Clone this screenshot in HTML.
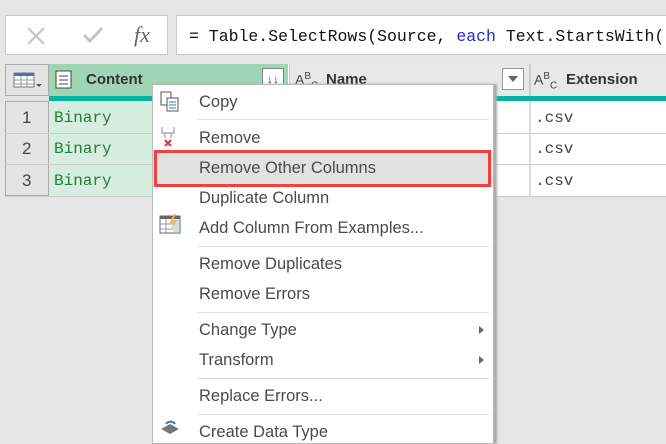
<!DOCTYPE html><html><head><style>
body{margin:0;width:666px;height:433px;background:#e6e6e6;position:relative;overflow:hidden;font-family:"Liberation Sans",sans-serif}
.a{position:absolute}
.mono{font-family:"Liberation Mono",monospace;font-size:16px}
.mi{position:absolute;left:46px;font-size:16.5px;color:#4a4a4a}
.sep{position:absolute;left:44px;right:4px;height:1px;background:#ddd}
</style></head><body>
<div class="a" style="left:5px;top:15px;width:163px;height:40px;background:#fff;border:1px solid #c8c8c8;box-sizing:border-box"></div>
<svg class="a" style="left:26px;top:26px" width="20" height="20"><path d="M2 2L18 18M18 2L2 18" stroke="#c4c4c4" stroke-width="2"/></svg>
<svg class="a" style="left:82px;top:26px" width="22" height="18"><path d="M2 9 L8 15 L20 2" stroke="#c4c4c4" stroke-width="3" fill="none"/></svg>
<div class="a" style="left:134px;top:22px;font-family:'Liberation Serif',serif;font-style:italic;font-size:22px;color:#666">fx</div>
<div class="a" style="left:176px;top:15px;width:500px;height:40px;background:#fff;border:1px solid #c8c8c8;box-sizing:border-box"></div>
<div class="a mono" style="left:189px;top:27px;font-size:16.5px;color:#111;white-space:pre">= Table.SelectRows(Source, <span style="color:#2a2ad0">each</span> Text.StartsWith(</div>
<div class="a" style="left:5px;top:64px;width:661px;height:133px;background:#fff"></div>
<div class="a" style="left:5px;top:64px;width:44px;height:32px;background:#e4e4e4;border:1px solid #aaa;box-sizing:border-box"></div>
<svg class="a" style="left:13px;top:72px" width="30" height="18"><rect x="1" y="1" width="20" height="14" fill="#fff" stroke="#777"/><rect x="1" y="1" width="20" height="3" fill="#3a78c4"/><path d="M1 8H21M1 12H21M8 4V15M14 4V15" stroke="#999"/><path d="M23 12l3 3 3-3z" fill="#555"/></svg>
<div class="a" style="left:49px;top:64px;width:239px;height:32px;background:#9fd4b5"></div>
<svg class="a" style="left:55px;top:70px" width="18" height="20"><rect x="1" y="1" width="15" height="17" fill="#fff" stroke="#444"/><path d="M4 6H13M4 10H13M4 14H13" stroke="#444"/></svg>
<div class="a" style="left:86px;top:71px;font-weight:bold;font-size:15px;color:#333">Content</div>
<div class="a" style="left:262px;top:68px;width:22px;height:22px;background:#fff;border:1px solid #888;box-sizing:border-box;font-size:12px;text-align:center;line-height:20px;font-weight:bold;color:#333">↓↓</div>
<div class="a" style="left:289px;top:64px;width:239px;height:32px;background:#e8e8e8;border-left:1px solid #ccc"></div>
<div class="a" style="left:295px;top:71px;font-size:14px;color:#444">A<sup style="font-size:10px">B</sup><sub style="font-size:10px">C</sub></div>
<div class="a" style="left:326px;top:71px;font-weight:bold;font-size:15px;color:#333">Name</div>
<div class="a" style="left:502px;top:68px;width:22px;height:22px;background:#fff;border:1px solid #999;box-sizing:border-box"></div>
<div class="a" style="left:508px;top:76px;border:5px solid transparent;border-top:6px solid #666"></div>
<div class="a" style="left:529px;top:64px;width:137px;height:32px;background:#e8e8e8;border-left:2px solid #ccc"></div>
<div class="a" style="left:534px;top:71px;font-size:14px;color:#444">A<sup style="font-size:10px">B</sup><sub style="font-size:10px">C</sub></div>
<div class="a" style="left:566px;top:71px;font-weight:bold;font-size:15px;color:#333">Extension</div>
<div class="a" style="left:49px;top:96px;width:617px;height:5px;background:#00b4a0"></div>
<div class="a" style="left:5px;top:96px;width:44px;height:5px;background:#e4e4e4"></div>
<div class="a" style="left:49px;top:101px;width:239px;height:95px;background:#d5eedf"></div>
<div class="a" style="left:5px;top:101px;width:44px;height:95px;background:#e4e4e4;border:1px solid #aaa;box-sizing:border-box"></div>
<div class="a" style="left:5px;top:133px;width:661px;height:1px;background:#ccc"></div>
<div class="a" style="left:5px;top:164px;width:661px;height:1px;background:#ccc"></div>
<div class="a" style="left:529px;top:101px;width:2px;height:95px;background:#ddd"></div>
<div class="a" style="left:5px;top:196px;width:661px;height:1px;background:#ccc"></div>
<div class="a" style="left:22px;top:108px;font-size:17px;color:#444">1</div>
<div class="a" style="left:22px;top:139px;font-size:17px;color:#444">2</div>
<div class="a" style="left:22px;top:171px;font-size:17px;color:#444">3</div>
<div class="a mono" style="left:54px;top:109px;color:#2a7a3a">Binary</div>
<div class="a mono" style="left:54px;top:140px;color:#2a7a3a">Binary</div>
<div class="a mono" style="left:54px;top:172px;color:#2a7a3a">Binary</div>
<div class="a mono" style="left:535px;top:109px;color:#444">.csv</div>
<div class="a mono" style="left:535px;top:140px;color:#444">.csv</div>
<div class="a mono" style="left:535px;top:172px;color:#444">.csv</div>
<div class="a" style="left:152px;top:84px;width:342px;height:360px;background:#fff;border:1px solid #bbb;box-sizing:border-box;box-shadow:3px 0 2px #aaa">
<svg class="a" style="left:6px;top:6px" width="22" height="22"><rect x="2" y="1" width="10" height="13" fill="#fff" stroke="#555"/><rect x="8" y="7" width="11" height="13" fill="#fff" stroke="#555"/><path d="M10 11H17M10 14H17M10 17H17" stroke="#3a78c4"/></svg>
<div class="mi" style="top:8px">Copy</div>
<div class="sep" style="top:34px"></div>
<svg class="a" style="left:6px;top:40px" width="20" height="22"><path d="M3 2V8H15V2M6 8V13M12 8V13" stroke="#888" fill="none"/><path d="M6 15L12 21M12 15L6 21" stroke="#d33" stroke-width="2"/></svg>
<div class="mi" style="top:44px">Remove</div>
<div class="a" style="left:0;top:65px;width:340px;height:37px;background:#e2e2e2"></div>
<div class="a" style="left:1px;top:65px;width:337px;height:37px;border:3px solid #f04040;box-sizing:border-box"></div>
<div class="mi" style="top:74px">Remove Other Columns</div>
<div class="mi" style="top:104px">Duplicate Column</div>
<svg class="a" style="left:6px;top:128px" width="22" height="22"><rect x="1" y="3" width="20" height="17" fill="#fff" stroke="#666"/><rect x="1" y="3" width="20" height="3" fill="#666"/><path d="M1 11H14M1 16H14M7 6V20" stroke="#999"/><rect x="14" y="6" width="6" height="13" fill="#cfe0e6"/><path d="M15 1L10 11H14L12 17L18 7H14L17 1z" fill="#f0b860"/></svg>
<div class="mi" style="top:134px">Add Column From Examples...</div>
<div class="sep" style="top:161px"></div>
<div class="mi" style="top:170px">Remove Duplicates</div>
<div class="mi" style="top:200px">Remove Errors</div>
<div class="sep" style="top:227px"></div>
<div class="mi" style="top:236px">Change Type</div>
<div class="a" style="left:326px;top:241px;border:4px solid transparent;border-left:5px solid #666"></div>
<div class="mi" style="top:266px">Transform</div>
<div class="a" style="left:326px;top:271px;border:4px solid transparent;border-left:5px solid #666"></div>
<div class="sep" style="top:293px"></div>
<div class="mi" style="top:302px">Replace Errors...</div>
<div class="sep" style="top:329px"></div>
<svg class="a" style="left:6px;top:334px" width="22" height="16"><path d="M2 10L11 5L20 10L11 15z" fill="#777"/><path d="M7 5A5 4 0 0 1 16 5" stroke="#3a78c4" stroke-width="2" fill="none"/></svg>
<div class="mi" style="top:338px">Create Data Type</div>
</div>
</body></html>
